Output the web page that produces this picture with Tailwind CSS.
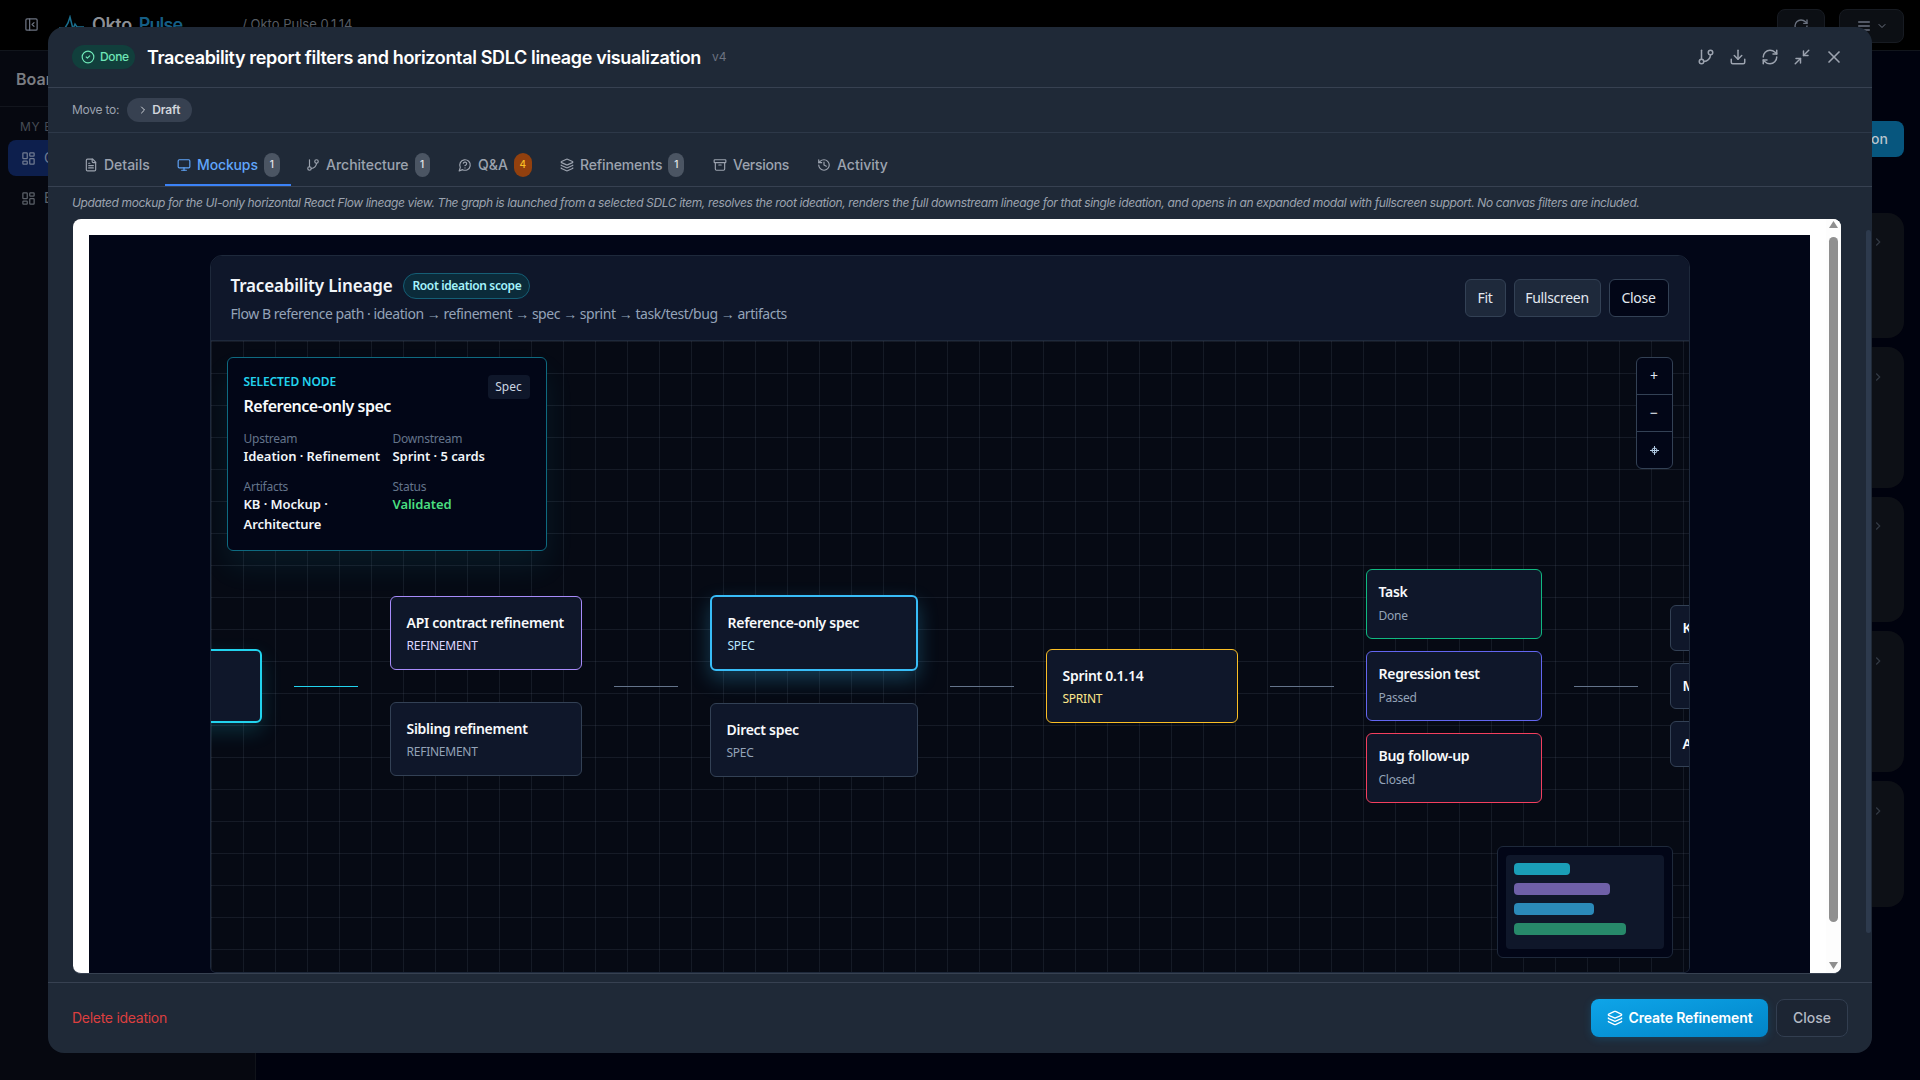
<!DOCTYPE html>
<html lang="en">
<head>
<meta charset="utf-8">
<title>Okto Pulse</title>
<script src="https://cdn.jsdelivr.net/npm/@tailwindcss/browser@4"></script>
</head>
<body class="relative w-[1920px] h-[1080px] overflow-hidden bg-[#00020e] font-['Inter',sans-serif]">

<!-- Page behind the modal -->
<div class="flex flex-col h-full">
  <header class="h-[51px] shrink-0 bg-black border-b border-[#11151c] flex items-center justify-between pl-6 pr-4">
    <div class="flex items-center text-[#6b7280]">
      <svg class="w-[15px] h-[15px] -mt-[1px]" viewBox="0 0 24 24" fill="none" stroke="currentColor" stroke-width="2" stroke-linecap="round" stroke-linejoin="round"><rect x="3" y="3" width="18" height="18" rx="2"/><path d="M9 3v18"/><path d="m16 15-3-3 3-3"/></svg>
      <svg class="ml-5 w-[25px] h-[20px]" viewBox="0 0 25 20" fill="none" stroke="#1a6f8f" stroke-width="1.5"><path d="M0 13h6l3-5 2-6 3 12 2-5 2 3h7"/></svg>
      <span class="ml-2 text-lg font-semibold text-[#8b8f96] tracking-[-0.02em]">Okto</span>
      <span class="ml-[7px] text-lg font-semibold text-[#155e85] tracking-[-0.05em]">Pulse</span>
      <span class="ml-[60px] text-[13px] text-[#555b63]">/ Okto Pulse 0.1.14</span>
    </div>
    <div class="flex items-center gap-[14px] -mb-[2px]">
      <div class="w-[48px] h-[34px] rounded-lg bg-[#0c0f14] border border-[#171b22] flex justify-center items-start pt-2 text-[#6b7280]">
        <svg class="w-4 h-4" viewBox="0 0 24 24" fill="none" stroke="currentColor" stroke-width="2" stroke-linecap="round" stroke-linejoin="round"><path d="M21 12a9 9 0 1 1-9-9c2.52 0 4.93 1 6.74 2.74L21 8"/><path d="M21 3v5h-5"/></svg>
      </div>
      <div class="w-[65px] h-[34px] rounded-lg bg-[#0c0f14] border border-[#171b22] flex justify-center items-start pt-2 gap-1 text-[#6b7280]">
        <svg class="w-4 h-4" viewBox="0 0 24 24" fill="none" stroke="currentColor" stroke-width="2" stroke-linecap="round"><path d="M4 6h16M4 12h16M4 18h16"/></svg>
        <svg class="w-3 h-3 mt-[2px]" viewBox="0 0 24 24" fill="none" stroke="currentColor" stroke-width="2" stroke-linecap="round"><path d="m6 9 6 6 6-6"/></svg>
      </div>
    </div>
  </header>
  <div class="flex flex-1 min-h-0">
    <aside class="w-64 shrink-0 bg-[#060810] border-r border-[#10131a] flex flex-col">
      <div class="h-[56px] shrink-0 border-b border-[#12151d] flex items-center pl-4 text-base font-semibold text-[#7a7d82]">Boards</div>
      <div class="mt-3 pl-5 text-xs text-[#474c55] tracking-wider">MY BOARDS</div>
      <div class="mt-[5px] mx-2 h-9 rounded-lg bg-[#0d1f4d] flex items-center gap-2 pl-[13px] text-[#6f7a90] text-sm">
        <svg class="w-[15px] h-[15px]" viewBox="0 0 24 24" fill="none" stroke="currentColor" stroke-width="2"><rect x="3" y="3" width="7" height="9" rx="1"/><rect x="14" y="3" width="7" height="5" rx="1"/><rect x="14" y="12" width="7" height="9" rx="1"/><rect x="3" y="16" width="7" height="5" rx="1"/></svg>
        Okto Pulse
      </div>
      <div class="mt-1 mx-2 h-9 flex items-center gap-2 pl-[13px] text-[#5b6068] text-sm">
        <svg class="w-[15px] h-[15px]" viewBox="0 0 24 24" fill="none" stroke="currentColor" stroke-width="2"><rect x="3" y="3" width="7" height="9" rx="1"/><rect x="14" y="3" width="7" height="5" rx="1"/><rect x="14" y="12" width="7" height="9" rx="1"/><rect x="3" y="16" width="7" height="5" rx="1"/></svg>
        Examples
      </div>
    </aside>
    <main class="flex-1 flex flex-col pt-[70px] pl-6 pr-4">
      <div class="self-end h-9 w-[180px] rounded-lg bg-[#07567e] flex items-center justify-end pr-4 text-sm font-medium text-[#b9c3cc]">New Ideation</div>
      <div class="mt-[56px] flex flex-col gap-[9px]">
        <div class="h-[125px] rounded-2xl bg-[#0d1016] relative"><svg class="absolute right-[19px] top-[22px] w-[14px] h-[14px] text-[#333a44]" viewBox="0 0 24 24" fill="none" stroke="currentColor" stroke-width="2"><path d="m9 18 6-6-6-6"/></svg></div>
        <div class="h-[141px] rounded-2xl bg-[#0d1016] relative"><svg class="absolute right-[19px] top-[23px] w-[14px] h-[14px] text-[#333a44]" viewBox="0 0 24 24" fill="none" stroke="currentColor" stroke-width="2"><path d="m9 18 6-6-6-6"/></svg></div>
        <div class="h-[125px] rounded-2xl bg-[#0d1016] relative"><svg class="absolute right-[19px] top-[22px] w-[14px] h-[14px] text-[#333a44]" viewBox="0 0 24 24" fill="none" stroke="currentColor" stroke-width="2"><path d="m9 18 6-6-6-6"/></svg></div>
        <div class="h-[141px] rounded-2xl bg-[#0d1016] relative"><svg class="absolute right-[19px] top-[23px] w-[14px] h-[14px] text-[#333a44]" viewBox="0 0 24 24" fill="none" stroke="currentColor" stroke-width="2"><path d="m9 18 6-6-6-6"/></svg></div>
        <div class="h-[126px] rounded-2xl bg-[#0d1016] relative"><svg class="absolute right-[19px] top-[23px] w-[14px] h-[14px] text-[#333a44]" viewBox="0 0 24 24" fill="none" stroke="currentColor" stroke-width="2"><path d="m9 18 6-6-6-6"/></svg></div>
      </div>
    </main>
  </div>
</div>

<!-- Modal -->
<div class="absolute inset-0 flex items-center justify-center">
  <div class="relative w-[1824px] h-[1026px] rounded-2xl bg-[#1f2937] flex flex-col overflow-hidden">
    <!-- scrollbar of the modal body -->
    <div class="absolute right-[1px] top-[203px] w-[5px] h-[703px] rounded-full bg-[#2d3a4d]"></div>

    <div class="h-[61px] shrink-0 border-b border-[#374151] flex items-center justify-between pl-6 pr-[29px]">
      <div class="flex items-center">
        <span class="h-6 pl-[9px] pr-2 rounded-full bg-[#113f3c] text-[#6ee7b7] text-xs font-medium tracking-[-0.03em] flex items-center gap-[5px] w-[63px]">
          <svg class="w-[14px] h-[14px] shrink-0" viewBox="0 0 24 24" fill="none" stroke="currentColor" stroke-width="2" stroke-linecap="round" stroke-linejoin="round"><circle cx="12" cy="12" r="10"/><path d="m9 12 2 2 4-4"/></svg>
          Done
        </span>
        <h1 class="ml-3 mt-[2px] text-lg font-semibold text-white tracking-[-0.02em]">Traceability report filters and horizontal SDLC lineage visualization</h1>
        <span class="ml-[11px] text-xs text-[#6b7280]">v4</span>
      </div>
      <div class="flex items-center gap-[14px] text-[#9ca3af]">
        <svg class="w-[18px] h-[18px]" viewBox="0 0 24 24" fill="none" stroke="currentColor" stroke-width="2" stroke-linecap="round" stroke-linejoin="round"><line x1="6" x2="6" y1="3" y2="15"/><circle cx="18" cy="6" r="3"/><circle cx="6" cy="18" r="3"/><path d="M18 9a9 9 0 0 1-9 9"/></svg>
        <svg class="w-[18px] h-[18px]" viewBox="0 0 24 24" fill="none" stroke="currentColor" stroke-width="2" stroke-linecap="round" stroke-linejoin="round"><path d="M21 15v4a2 2 0 0 1-2 2H5a2 2 0 0 1-2-2v-4"/><polyline points="7 10 12 15 17 10"/><line x1="12" x2="12" y1="15" y2="3"/></svg>
        <svg class="w-[18px] h-[18px]" viewBox="0 0 24 24" fill="none" stroke="currentColor" stroke-width="2" stroke-linecap="round" stroke-linejoin="round"><path d="M3 12a9 9 0 0 1 9-9 9.75 9.75 0 0 1 6.74 2.74L21 8"/><path d="M21 3v5h-5"/><path d="M21 12a9 9 0 0 1-9 9 9.75 9.75 0 0 1-6.74-2.74L3 16"/><path d="M8 16H3v5"/></svg>
        <svg class="w-[18px] h-[18px]" viewBox="0 0 24 24" fill="none" stroke="currentColor" stroke-width="2" stroke-linecap="round" stroke-linejoin="round"><polyline points="4 14 10 14 10 20"/><polyline points="20 10 14 10 14 4"/><line x1="14" x2="21" y1="10" y2="3"/><line x1="3" x2="10" y1="21" y2="14"/></svg>
        <svg class="w-5 h-5 -mx-px" viewBox="0 0 24 24" fill="none" stroke="currentColor" stroke-width="2" stroke-linecap="round" stroke-linejoin="round"><path d="M18 6 6 18"/><path d="m6 6 12 12"/></svg>
      </div>
    </div>

    <div class="h-[45px] shrink-0 border-b border-[#2d3848] flex items-center pl-6">
      <span class="text-xs text-[#9ca3af] tracking-[-0.02em]">Move to:</span>
      <span class="ml-2 h-6 w-[65px] rounded-full bg-[#374151] flex items-center gap-[3px] pl-[10px] text-xs font-semibold text-[#d1d5db] tracking-[-0.01em]">
        <svg class="w-3 h-3" viewBox="0 0 24 24" fill="none" stroke="currentColor" stroke-width="2" stroke-linecap="round" stroke-linejoin="round"><path d="m9 18 6-6-6-6"/></svg>
        Draft
      </span>
    </div>

    <nav class="h-[54px] shrink-0 border-b border-[#374151] flex items-end pl-6 text-sm font-medium text-[#9ca3af]">
      <span class="h-[53px] w-[93px] flex items-center gap-[6px] pl-3 pt-[10px]">
        <svg class="w-[14px] h-[14px] shrink-0" viewBox="0 0 24 24" fill="none" stroke="currentColor" stroke-width="2" stroke-linecap="round" stroke-linejoin="round"><path d="M15 2H6a2 2 0 0 0-2 2v16a2 2 0 0 0 2 2h12a2 2 0 0 0 2-2V7Z"/><path d="M14 2v4a2 2 0 0 0 2 2h4"/><path d="M10 9H8"/><path d="M16 13H8"/><path d="M16 17H8"/></svg>
        Details
      </span>
      <span class="h-[53px] w-[126px] flex items-center gap-[6px] pl-3 text-[#60a5fa] border-b-2 border-[#3b82f6] pt-[12px] tracking-[-0.01em]">
        <svg class="w-[14px] h-[14px] shrink-0" viewBox="0 0 24 24" fill="none" stroke="currentColor" stroke-width="2" stroke-linecap="round" stroke-linejoin="round"><rect width="20" height="14" x="2" y="3" rx="2"/><line x1="8" x2="16" y1="21" y2="21"/><line x1="12" x2="12" y1="17" y2="21"/></svg>
        Mockups
        <span class="w-4 h-6 rounded-full bg-[#4b5563] text-[#e5e7eb] text-[10px] flex items-center justify-center">1</span>
      </span>
      <span class="h-[53px] w-[157px] flex items-center gap-[6px] pl-[15px] pt-[10px]">
        <svg class="w-[14px] h-[14px] shrink-0" viewBox="0 0 24 24" fill="none" stroke="currentColor" stroke-width="2" stroke-linecap="round" stroke-linejoin="round"><line x1="6" x2="6" y1="3" y2="15"/><circle cx="18" cy="6" r="3"/><circle cx="6" cy="18" r="3"/><path d="M18 9a9 9 0 0 1-9 9"/></svg>
        Architecture
        <span class="w-[15px] h-6 rounded-full bg-[#4b5563] text-[#e5e7eb] text-[10px] flex items-center justify-center">1</span>
      </span>
      <span class="h-[53px] w-[100px] flex items-center gap-[6px] pl-[10px] pt-[10px]">
        <svg class="w-[14px] h-[14px] shrink-0" viewBox="0 0 24 24" fill="none" stroke="currentColor" stroke-width="2" stroke-linecap="round" stroke-linejoin="round"><path d="M7.9 20A9 9 0 1 0 4 16.1L2 22Z"/><path d="M9.09 9a3 3 0 0 1 5.83 1c0 2-3 3-3 3"/><path d="M12 17h.01"/></svg>
        Q&amp;A
        <span class="w-[18px] h-6 rounded-full bg-[#92400e] text-[#fbbf24] text-[10px] flex items-center justify-center">4</span>
      </span>
      <span class="h-[53px] w-[155px] flex items-center gap-[6px] pl-3 pt-[10px] tracking-[-0.01em]">
        <svg class="w-[14px] h-[14px] shrink-0" viewBox="0 0 24 24" fill="none" stroke="currentColor" stroke-width="2" stroke-linecap="round" stroke-linejoin="round"><path d="M12.83 2.18a2 2 0 0 0-1.66 0L2.6 6.08a1 1 0 0 0 0 1.83l8.58 3.91a2 2 0 0 0 1.66 0l8.58-3.9a1 1 0 0 0 0-1.83Z"/><path d="M2 12a1 1 0 0 0 .58.91l8.6 3.91a2 2 0 0 0 1.65 0l8.58-3.9A1 1 0 0 0 22 12"/><path d="M2 17a1 1 0 0 0 .58.91l8.6 3.91a2 2 0 0 0 1.65 0l8.58-3.9A1 1 0 0 0 22 17"/></svg>
        Refinements
        <span class="w-4 h-6 rounded-full bg-[#4b5563] text-[#e5e7eb] text-[10px] flex items-center justify-center">1</span>
      </span>
      <span class="h-[53px] w-[112px] flex items-center gap-[6px] pl-[10px] pt-[10px] tracking-[-0.02em]">
        <svg class="w-[14px] h-[14px] shrink-0" viewBox="0 0 24 24" fill="none" stroke="currentColor" stroke-width="2" stroke-linecap="round" stroke-linejoin="round"><rect width="20" height="5" x="2" y="3" rx="1"/><path d="M4 8v11a2 2 0 0 0 2 2h12a2 2 0 0 0 2-2V8"/><path d="M10 12h4"/></svg>
        Versions
      </span>
      <span class="h-[53px] flex items-center gap-[6px] pl-[2px] pt-[10px]">
        <svg class="w-[14px] h-[14px] shrink-0" viewBox="0 0 24 24" fill="none" stroke="currentColor" stroke-width="2" stroke-linecap="round" stroke-linejoin="round"><path d="M3 12a9 9 0 1 0 9-9 9.75 9.75 0 0 0-6.74 2.74L3 8"/><path d="M3 3v5h5"/><path d="M12 7v5l4 2"/></svg>
        Activity
      </span>
    </nav>

    <p class="h-[32px] shrink-0 pl-6 flex items-center text-xs italic text-[#9ca3af] tracking-[-0.37px] whitespace-nowrap">Updated mockup for the UI-only horizontal React Flow lineage view. The graph is launched from a selected SDLC item, resolves the root ideation, renders the full downstream lineage for that single ideation, and opens in an expanded modal with fullscreen support. No canvas filters are included.</p>

    <!-- Embedded mockup -->
    <div class="ml-[25px] mr-[31px] h-[755px] shrink-0 rounded-lg bg-white border-b border-[#374151] flex overflow-hidden font-['Noto_Sans',sans-serif]">
      <div class="flex-1 min-w-0 pt-4 pl-4 pr-4">
        <div class="h-full bg-[#020617] pt-5 flex justify-center">
          <div class="w-[1480px] h-full rounded-t-xl rounded-b-md border border-[#1e293b] bg-[#020617] flex flex-col overflow-hidden">
            <div class="h-[85px] shrink-0 bg-[#0f172a] border-b border-[#1e293b] flex items-center justify-between px-5">
              <div>
                <div class="flex items-center gap-[11px] h-[26px]">
                  <h2 class="mt-px text-[17px] font-semibold text-[#f1f5f9] tracking-[-0.01em]">Traceability Lineage</h2>
                  <span class="h-[26px] px-2 rounded-full border border-[#155e75] bg-[#0b2b3a] text-xs font-semibold text-[#a5f3fc] tracking-[-0.03em] flex items-center">Root ideation scope</span>
                </div>
                <p class="mt-[5px] text-sm leading-5 text-[#94a3b8] tracking-[-0.46px]">Flow B reference path · ideation → refinement → spec → sprint → task/test/bug → artifacts</p>
              </div>
              <div class="flex items-center gap-2 text-sm text-[#e2e8f0] tracking-[-0.02em]">
                <span class="h-[38px] w-[41px] rounded-md border border-[#334155] bg-[#1e293b] flex items-center justify-center">Fit</span>
                <span class="h-[38px] w-[87px] rounded-md border border-[#334155] bg-[#1e293b] flex items-center justify-center">Fullscreen</span>
                <span class="h-[38px] w-[60px] rounded-md border border-[#334155] bg-[#020617] flex items-center justify-center">Close</span>
              </div>
            </div>

            <!-- Canvas -->
            <div class="relative flex-1 min-h-0 overflow-hidden bg-[#060a14] bg-[linear-gradient(rgba(148,163,184,0.11)_1px,transparent_1px),linear-gradient(90deg,rgba(148,163,184,0.11)_1px,transparent_1px)] bg-[size:32px_32px]">

              <!-- Graph -->
              <div class="absolute left-[-157px] top-[228px] h-[234px] flex items-center gap-8">
                <div class="w-[208px] h-[74px] shrink-0 rounded-md border-2 border-[#22d3ee] bg-[#0f172a] shadow-[0_8px_20px_rgba(34,211,238,0.18)] px-4 py-[14px]">
                  <div class="text-sm font-semibold leading-5 text-white">Root ideation</div>
                  <div class="mt-1 text-xs text-[#a5f3fc]">IDEATION</div>
                </div>
                <div class="w-16 h-px shrink-0 bg-[#22d3ee]"></div>
                <div class="w-[192px] shrink-0 flex flex-col gap-8">
                  <div class="h-[74px] rounded-md border border-[#a78bfa] bg-[#0f172a] px-4 py-4">
                    <div class="text-sm font-semibold leading-5 text-[#f8fafc] tracking-[-0.02em] whitespace-nowrap">API contract refinement</div>
                    <div class="mt-1 text-xs leading-[17px] text-[#ddd6fe] tracking-[-0.02em]">REFINEMENT</div>
                  </div>
                  <div class="h-[74px] rounded-md border border-[#334155] bg-[#0f172a] px-4 py-4">
                    <div class="text-sm font-semibold leading-5 text-[#f8fafc] tracking-[-0.02em]">Sibling refinement</div>
                    <div class="mt-1 text-xs leading-[17px] text-[#94a3b8] tracking-[-0.02em]">REFINEMENT</div>
                  </div>
                </div>
                <div class="w-16 h-px shrink-0 bg-[#64748b]"></div>
                <div class="w-[208px] shrink-0 flex flex-col gap-8">
                  <div class="h-[76px] rounded-md border-2 border-[#38bdf8] bg-[#0f172a] shadow-[0_8px_20px_rgba(56,189,248,0.28)] px-4 py-4">
                    <div class="text-sm font-semibold leading-5 text-[#f8fafc] tracking-[-0.02em]">Reference-only spec</div>
                    <div class="mt-1 text-xs leading-[17px] text-[#bae6fd] tracking-[-0.02em]">SPEC</div>
                  </div>
                  <div class="h-[74px] rounded-md border border-[#334155] bg-[#0f172a] px-4 py-4">
                    <div class="text-sm font-semibold leading-5 text-[#f8fafc] tracking-[-0.02em]">Direct spec</div>
                    <div class="mt-1 text-xs leading-[17px] text-[#94a3b8] tracking-[-0.02em]">SPEC</div>
                  </div>
                </div>
                <div class="w-16 h-px shrink-0 bg-[#64748b]"></div>
                <div class="w-[192px] h-[74px] shrink-0 rounded-md border border-[#fbbf24] bg-[#0f172a] px-4 py-4">
                  <div class="text-sm font-semibold leading-5 text-[#f8fafc] tracking-[-0.02em]">Sprint 0.1.14</div>
                  <div class="mt-1 text-xs leading-[17px] text-[#fde68a] tracking-[-0.02em]">SPRINT</div>
                </div>
                <div class="w-16 h-px shrink-0 bg-[#64748b]"></div>
                <div class="w-[176px] shrink-0 flex flex-col gap-3">
                  <div class="h-[70px] rounded-md border border-[#10b981] bg-[#0f172a] px-3 py-3">
                    <div class="text-sm font-semibold leading-5 text-[#f8fafc] tracking-[-0.02em]">Task</div>
                    <div class="mt-[5px] text-xs leading-[17px] text-[#94a3b8] tracking-[-0.02em]">Done</div>
                  </div>
                  <div class="h-[70px] rounded-md border border-[#6366f1] bg-[#0f172a] px-3 py-3">
                    <div class="text-sm font-semibold leading-5 text-[#f8fafc] tracking-[-0.02em]">Regression test</div>
                    <div class="mt-[5px] text-xs leading-[17px] text-[#94a3b8] tracking-[-0.02em]">Passed</div>
                  </div>
                  <div class="h-[70px] rounded-md border border-[#f43f5e] bg-[#0f172a] px-3 py-3">
                    <div class="text-sm font-semibold leading-5 text-[#f8fafc] tracking-[-0.02em]">Bug follow-up</div>
                    <div class="mt-[5px] text-xs leading-[17px] text-[#94a3b8] tracking-[-0.02em]">Closed</div>
                  </div>
                </div>
                <div class="w-16 h-px shrink-0 bg-[#64748b]"></div>
                <div class="w-[144px] shrink-0 flex flex-col gap-3">
                  <div class="h-[46px] rounded-md border border-[#334155] bg-[#0f172a] pl-3 flex items-center text-sm font-semibold text-[#f8fafc]">KB</div>
                  <div class="h-[46px] rounded-md border border-[#334155] bg-[#0f172a] pl-3 flex items-center text-sm font-semibold text-[#f8fafc]">Mockup</div>
                  <div class="h-[46px] rounded-md border border-[#334155] bg-[#0f172a] pl-3 flex items-center text-sm font-semibold text-[#f8fafc]">Architecture</div>
                </div>
              </div>

              <!-- Selected node panel -->
              <div class="absolute left-4 top-4 w-[320px] h-[194px] rounded-md border border-[#0e6a80] bg-[#020617] shadow-[0_16px_30px_rgba(34,211,238,0.08)] p-4">
                <div class="flex justify-between items-start">
                  <div>
                    <div class="text-xs font-semibold leading-4 text-[#22d3ee] tracking-[-0.01em]">SELECTED NODE</div>
                    <div class="mt-1 text-base font-semibold leading-6 text-[#f8fafc] tracking-[-0.03em]">Reference-only spec</div>
                  </div>
                  <span class="mt-px h-6 w-[42px] rounded bg-[#0f172a] text-xs text-[#cbd5e1] flex items-center justify-center">Spec</span>
                </div>
                <div class="mt-[13px] grid grid-cols-2 gap-x-[10px] gap-y-[13px] w-[288px]">
                  <div>
                    <div class="text-xs leading-4 text-[#64748b] tracking-[-0.02em]">Upstream</div>
                    <div class="-mt-px text-[13px] leading-5 font-semibold text-[#f1f5f9] tracking-[-0.005em] whitespace-nowrap">Ideation · Refinement</div>
                  </div>
                  <div>
                    <div class="text-xs leading-4 text-[#64748b] tracking-[-0.02em]">Downstream</div>
                    <div class="-mt-px text-[13px] leading-5 font-semibold text-[#f1f5f9] tracking-[-0.005em]">Sprint · 5 cards</div>
                  </div>
                  <div>
                    <div class="text-xs leading-4 text-[#64748b] tracking-[-0.02em]">Artifacts</div>
                    <div class="-mt-px text-[13px] leading-5 font-semibold text-[#f1f5f9] tracking-[-0.005em]">KB · Mockup ·<br>Architecture</div>
                  </div>
                  <div>
                    <div class="text-xs leading-4 text-[#64748b] tracking-[-0.02em]">Status</div>
                    <div class="-mt-px text-[13px] leading-5 font-semibold text-[#4ade80] tracking-[-0.005em]">Validated</div>
                  </div>
                </div>
              </div>

              <!-- Zoom controls -->
              <div class="absolute right-4 top-4 w-[37px] h-[112px] rounded-md border border-[#334155] bg-[#020617] flex flex-col text-[#e2e8f0] text-sm divide-y divide-[#334155]">
                <div class="flex-1 flex items-center justify-center">+</div>
                <div class="flex-1 flex items-center justify-center">−</div>
                <div class="flex-1 flex items-center justify-center">
                  <svg class="w-[9px] h-[9px]" viewBox="0 0 9 9" fill="none" stroke="#b4cde6" stroke-width="1"><circle cx="4.5" cy="4.5" r="2.5"/><path d="M4.5 0v9M0 4.5h9"/></svg>
                </div>
              </div>

              <!-- Minimap -->
              <div class="absolute right-4 bottom-[14px] w-[176px] h-[112px] rounded-md border border-[#1e293b] bg-[#020617] p-2">
                <div class="h-full rounded bg-[#0f172a] p-2 flex flex-col gap-2">
                  <div class="w-14 h-3 rounded bg-[#1a9eb8]"></div>
                  <div class="w-24 h-3 rounded bg-[#6f60a8]"></div>
                  <div class="w-20 h-3 rounded bg-[#2b8ab9]"></div>
                  <div class="w-28 h-3 rounded bg-[#27896a]"></div>
                </div>
              </div>
            </div>
          </div>
        </div>
      </div>
      <!-- iframe scrollbar -->
      <div class="w-[15px] shrink-0 bg-[#fdfdfd] flex flex-col items-center pt-[2px] pb-[4px] pr-[1px]">
        <svg class="w-[9px] h-[7px] shrink-0" viewBox="0 0 9 7"><path d="M4.5 0 9 7H0Z" fill="#8f8f8f"/></svg>
        <div class="mt-[9px] w-[9px] flex-1 rounded-full bg-[#8f8f8f] mb-[40px]"></div>
        <svg class="w-[9px] h-[7px] shrink-0" viewBox="0 0 9 7"><path d="M4.5 7 9 0H0Z" fill="#8f8f8f"/></svg>
      </div>
    </div>

    <div class="mt-2 flex-1 border-t border-[#374151] flex items-center justify-between pl-6 pr-6">
      <span class="text-sm text-[#dc3f3f] tracking-[-0.02em]">Delete ideation</span>
      <div class="flex items-center gap-2">
        <span class="h-[38px] w-[177px] rounded-lg bg-gradient-to-br from-[#0ea5e9] to-[#0284c7] text-white text-sm font-semibold tracking-[-0.01em] flex items-center justify-center gap-[6px] shadow-[0_2px_8px_rgba(14,165,233,0.2)]">
          <svg class="w-4 h-4 shrink-0" viewBox="0 0 24 24" fill="none" stroke="currentColor" stroke-width="2" stroke-linecap="round" stroke-linejoin="round"><path d="M12.83 2.18a2 2 0 0 0-1.66 0L2.6 6.08a1 1 0 0 0 0 1.83l8.58 3.91a2 2 0 0 0 1.66 0l8.58-3.9a1 1 0 0 0 0-1.83Z"/><path d="M2 12a1 1 0 0 0 .58.91l8.6 3.91a2 2 0 0 0 1.65 0l8.58-3.9A1 1 0 0 0 22 12"/><path d="M2 17a1 1 0 0 0 .58.91l8.6 3.91a2 2 0 0 0 1.65 0l8.58-3.9A1 1 0 0 0 22 17"/></svg>
          Create Refinement
        </span>
        <span class="h-[38px] w-[72px] rounded-lg border border-[#323e50] bg-[#1c2533] text-[#b4bac4] text-sm font-medium flex items-center justify-center">Close</span>
      </div>
    </div>
  </div>
</div>
</body>
</html>
